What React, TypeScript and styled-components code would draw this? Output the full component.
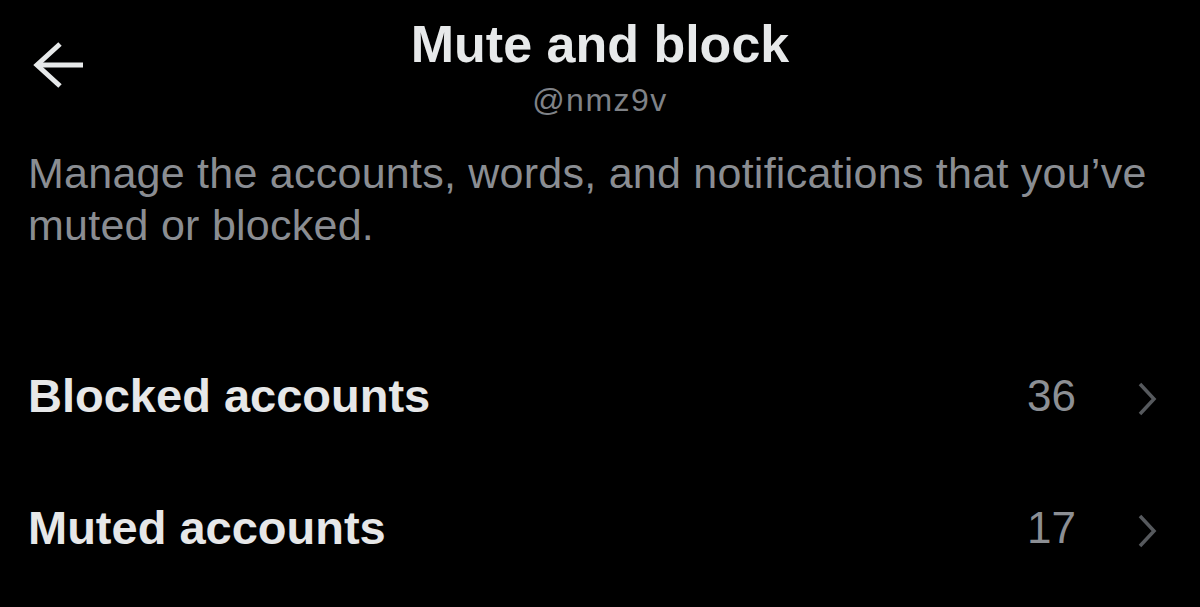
import styled, { createGlobalStyle } from "styled-components";

const GlobalStyle = createGlobalStyle`
  html, body {
    margin: 0;
    padding: 0;
    background-color: #000000;
  }
  body {
    font-family: "Liberation Sans", Arial, sans-serif;
    -webkit-font-smoothing: antialiased;
  }
`;

const Page = styled.div`
  width: 1200px;
  height: 607px;
  overflow: hidden;
  background-color: #000000;
  padding-top: 14px;
  box-sizing: border-box;
  display: flex;
  flex-direction: column;
`;

const Header = styled.header`
  display: grid;
  grid-template-columns: 1fr auto 1fr;
  padding: 0 33px;
`;

const BackButton = styled.button`
  grid-column: 1;
  justify-self: start;
  align-self: start;
  margin-top: 28px;
  padding: 0;
  border: none;
  background: none;
  display: flex;
  cursor: pointer;
`;

const TitleBlock = styled.div`
  grid-column: 2;
  display: flex;
  flex-direction: column;
  align-items: center;
`;

const Title = styled.h1`
  margin: 0;
  font-size: 52px;
  line-height: 60px;
  font-weight: 700;
  color: #e7e9ea;
`;

const Handle = styled.div`
  margin-top: 6px;
  font-size: 32px;
  line-height: 40px;
  letter-spacing: 1.5px;
  color: #7f8287;
`;

const Description = styled.p`
  margin: 27px 0 0;
  padding: 0 28px;
  font-size: 43px;
  line-height: 52px;
  letter-spacing: 0.25px;
  color: #8a8d92;
`;

const List = styled.ul`
  list-style: none;
  margin: 79px 0 0;
  padding: 0;
`;

const Row = styled.li`
  height: 132px;
  display: flex;
  align-items: center;
  padding: 0 43px 0 28px;
`;

const Label = styled.span`
  flex: 1;
  font-size: 47px;
  line-height: 56px;
  font-weight: 700;
  color: #e6e7e8;
`;

const Count = styled.span`
  font-size: 44px;
  line-height: 56px;
  color: #8c8f94;
  margin-right: 61px;
`;

const Chevron = styled.svg`
  margin-top: 6px;
  flex-shrink: 0;
`;

const ArrowIcon = () => (
  <svg width="52" height="46" viewBox="0 0 52 46" fill="none">
    <path d="M27 2 L4 23 L27 44" stroke="#e7e9ea" strokeWidth="5" />
    <path d="M4 23 H50" stroke="#e7e9ea" strokeWidth="5" />
  </svg>
);

type Item = { label: string; count: number };

const items: Item[] = [
  { label: "Blocked accounts", count: 36 },
  { label: "Muted accounts", count: 17 },
];

const App = () => {
  return (
    <>
      <GlobalStyle />
      <Page>
        <Header>
          <BackButton aria-label="Back">
            <ArrowIcon />
          </BackButton>
          <TitleBlock>
            <Title>Mute and block</Title>
            <Handle>@nmz9v</Handle>
          </TitleBlock>
        </Header>
        <Description>
          Manage the accounts, words, and notifications that you’ve muted or
          blocked.
        </Description>
        <List>
          {items.map((item) => (
            <Row key={item.label}>
              <Label>{item.label}</Label>
              <Count>{item.count}</Count>
              <Chevron width="20" height="34" viewBox="0 0 20 34" fill="none">
                <path d="M3 2 L17 17 L3 32" stroke="#56595d" strokeWidth="3.5" />
              </Chevron>
            </Row>
          ))}
        </List>
      </Page>
    </>
  );
};

export default App;
